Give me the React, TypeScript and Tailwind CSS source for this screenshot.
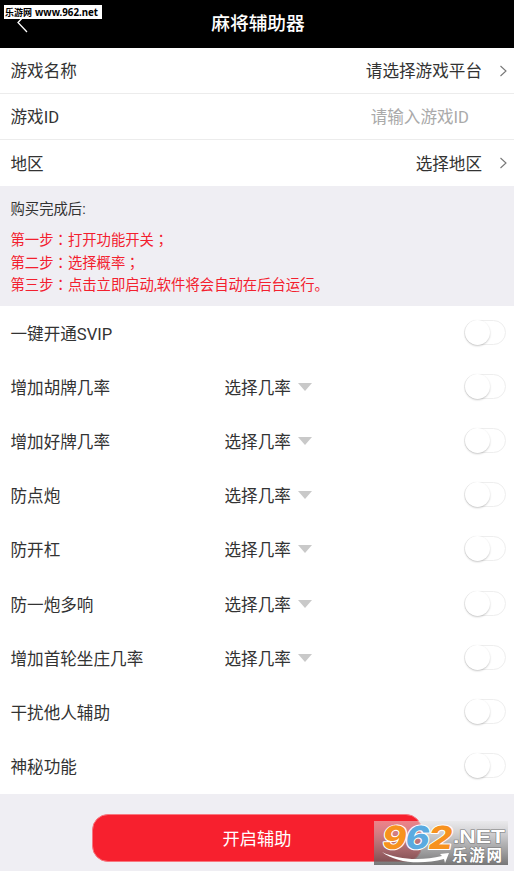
const features = [
  { name: '一键开通SVIP', rate: false },
  { name: '增加胡牌几率', rate: true },
  { name: '增加好牌几率', rate: true },
  { name: '防点炮', rate: true },
  { name: '防开杠', rate: true },
  { name: '防一炮多响', rate: true },
  { name: '增加首轮坐庄几率', rate: true },
  { name: '干扰他人辅助', rate: false },
  { name: '神秘功能', rate: false },
]

const steps = [
  { label: '第一步', text: '打开功能开关', end: '；' },
  { label: '第二步', text: '选择概率', end: '；' },
  { label: '第三步', text: '点击立即启动,软件将会自动在后台运行', end: '。' },
]

// Centred full-width punctuation
function Punct({ children }: { children: string }) {
  return <span className="font-['Noto_Sans_CJK_JP',sans-serif]">{children}</span>
}

function Chevron() {
  return (
    <svg className="ml-[18px] mb-[3px] w-2 h-3" viewBox="0 0 8 12" fill="none" stroke="#777" strokeWidth="1.1">
      <path d="M0.5 1L6 6L0.5 11" />
    </svg>
  )
}

function Toggle() {
  return (
    <div className="w-[42px] h-[25px] mb-[5px] rounded-full border border-[#eee] bg-white">
      <div className="w-[25px] h-[25px] -mt-px rounded-full bg-white shadow-[0_1px_2px_rgba(0,0,0,0.22)]" />
    </div>
  )
}

function Watermark() {
  return (
    <svg className="absolute left-[374px] top-[813px]" width="134" height="56" viewBox="0 -8 134 56">
      <defs>
        <linearGradient id="plate" x1="0" y1="0" x2="0" y2="1">
          <stop offset="0" stopColor="#e4e4e4" stopOpacity="0.5" />
          <stop offset="0.5" stopColor="#999" stopOpacity="0.68" />
          <stop offset="1" stopColor="#555" stopOpacity="0.78" />
        </linearGradient>
      </defs>
      <rect width="134" height="44" fill="url(#plate)" />
      <path d="M8 31C24 39 48 40 68 35L66 33L75 32L71 42L70 38C47 44 22 42 8 31Z" fill="#fff" />
      <g
        className="font-['Inter',sans-serif]"
        fontSize="32"
        fontWeight="800"
        stroke="#fff"
        strokeWidth="2"
        paintOrder="stroke"
        strokeLinejoin="round"
        transform="translate(0 27.5) skewX(-10)"
      >
        <text x="7" y="0" fill="#f7921e" textLength="24" lengthAdjust="spacingAndGlyphs">9</text>
        <text x="30" y="0" fill="#5aaae0" textLength="24" lengthAdjust="spacingAndGlyphs">6</text>
        <text x="53" y="0" fill="#f7921e" textLength="24" lengthAdjust="spacingAndGlyphs">2</text>
      </g>
      <text x="79" y="21.5" className="font-['Liberation_Sans',sans-serif]" fontSize="18" fontWeight="700" fill="#fff" stroke="#777" strokeWidth="1" paintOrder="stroke" textLength="52" lengthAdjust="spacingAndGlyphs">.NET</text>
      <text x="78" y="40" className="font-['Noto_Sans_CJK_SC',sans-serif]" fontSize="15.5" fontWeight="700" fill="#fff" stroke="#777" strokeWidth="1" paintOrder="stroke" textLength="50">乐游网</text>
    </svg>
  )
}

export default function App() {
  return (
    <main className="relative w-[514px] h-[871px] flex flex-col overflow-hidden bg-white text-[#333] text-[16.6px] font-['Roboto','Noto_Sans_CJK_SC',sans-serif]">
      {/* Header */}
      <header className="h-12 shrink-0 flex items-center justify-center bg-black text-white">
        <h1 className="text-[18.7px] leading-6 pl-0.5 font-medium">麻将辅助器</h1>
        <svg className="absolute left-4 top-3" width="14" height="22" viewBox="0 0 14 22" fill="none" stroke="#fff" strokeWidth="1.3">
          <path d="M11 1L2 10.5L11 20" />
        </svg>
        <div className="absolute left-1 top-[5px] w-[98px] h-[14px] bg-white text-black text-[9px] leading-[14px] font-bold whitespace-nowrap font-['Noto_Sans','Noto_Sans_CJK_SC',sans-serif]">
          <svg className="block" width="98" height="14">
            <text x="1" y="11" textLength="27">乐游网</text>
            <text x="31" y="11" fontSize="10" textLength="63" lengthAdjust="spacingAndGlyphs">www.962.net</text>
          </svg>
        </div>
      </header>

      {/* Game settings */}
      <section className="h-[138px] shrink-0 leading-6">
        <div className="h-[46px] pt-[3px] pl-[10.5px] pr-1.5 flex items-center border-b border-[#ececec]">
          <span>游戏名称</span>
          <span className="ml-auto">请选择游戏平台</span>
          <Chevron />
        </div>
        <div className="h-[46px] pt-[3px] pl-[10.5px] pr-[45px] flex items-center justify-between border-b border-[#ececec]">
          <span>游戏ID</span>
          <span className="text-[#aaa]">请输入游戏ID</span>
        </div>
        <div className="h-[46px] pt-[3px] pl-[10.5px] pr-1.5 flex items-center">
          <span>地区</span>
          <span className="ml-auto">选择地区</span>
          <Chevron />
        </div>
      </section>

      {/* Instructions */}
      <section className="h-[120px] shrink-0 pl-[10.5px] pt-[13px] bg-[#efeef3] text-[14.35px] leading-[22.4px]">
        <p className="mb-[7px]">购买完成后:</p>
        {steps.map((step) => (
          <p key={step.label} className="h-[22.4px] text-[#f3202e]">
            {step.label}<Punct>：</Punct>{step.text}<Punct>{step.end}</Punct>
          </p>
        ))}
      </section>

      {/* Features */}
      <section className="h-[488px] shrink-0 grid grid-rows-9">
        {features.map((feature) => (
          <div key={feature.name} className="pt-[3px] pl-[10.5px] pr-2 grid grid-cols-[214px_1fr_42px] items-center leading-6">
            <span>{feature.name}</span>
            <div className="flex items-center">
              {feature.rate && (
                <>
                  <span>选择几率</span>
                  <svg className="ml-[7px] mb-1" width="14" height="8" viewBox="0 0 14 8">
                    <path d="M0 0H14L7 8Z" fill="#c9c9c9" />
                  </svg>
                </>
              )}
            </div>
            <Toggle />
          </div>
        ))}
      </section>

      {/* Start button */}
      <footer className="grow pt-5 bg-[#efeef3] flex justify-center items-start">
        <button className="w-[330px] h-[48px] pt-[3px] rounded-2xl border border-[#f7777f] bg-[#f7202e] text-white text-[17.2px]">开启辅助</button>
      </footer>

      <Watermark />
    </main>
  )
}
